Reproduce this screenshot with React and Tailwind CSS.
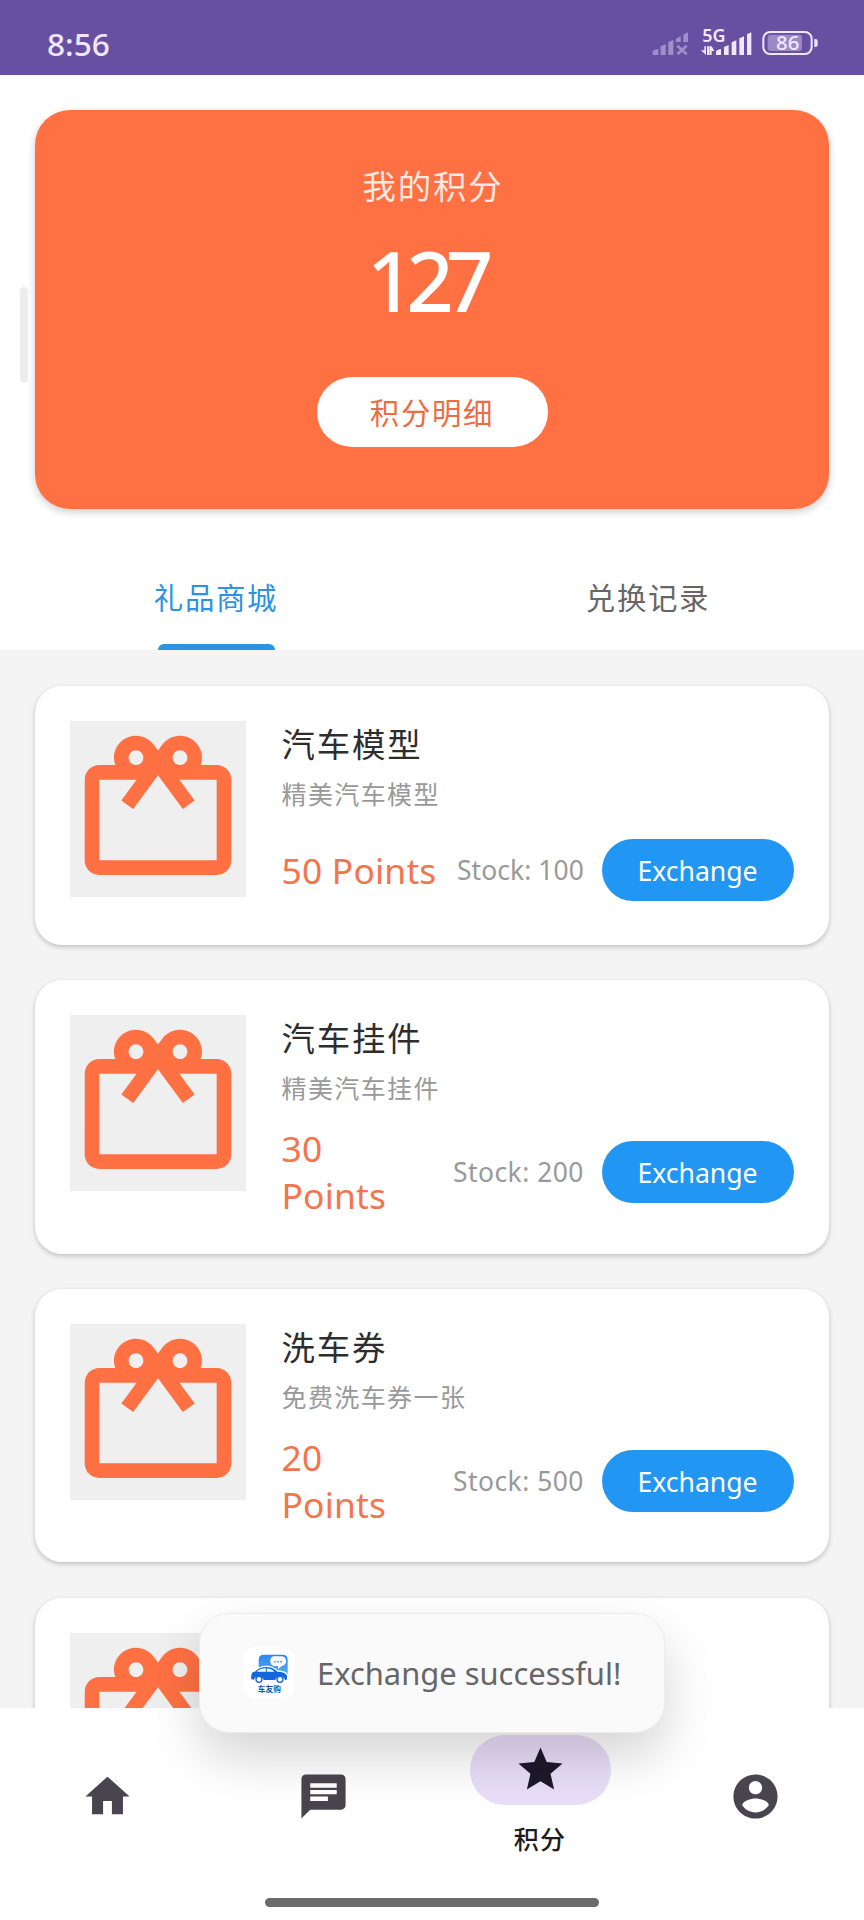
import React from 'react';

const gifts = [
  { name: '汽车模型', desc: '精美汽车模型', points: '50 Points', stock: 100 },
  { name: '汽车挂件', desc: '精美汽车挂件', points: '30\nPoints', stock: 200 },
  { name: '洗车券', desc: '免费洗车券一张', points: '20\nPoints', stock: 500 },
  { name: '', desc: '', points: '', stock: null },
];

const navItems = [
  { id: 'home', path: 'M10,20v-6h4v6h5v-8h3L12,3 2,12h3v8z' },
  {
    id: 'chat',
    path: 'M20,2L4,2c-1.1,0 -1.99,0.9 -1.99,2L2,22l4,-4h14c1.1,0 2,-0.9 2,-2L22,4c0,-1.1 -0.9,-2 -2,-2zM6,9h12v2L6,11L6,9zM14,14L6,14v-2h8v2zM18,8L6,8L6,6h12v2z',
  },
  {
    id: 'points',
    label: '积分',
    path: 'M12,17.27L18.18,21l-1.64,-7.03L22,9.24l-7.19,-0.61L12,2 9.19,8.63 2,9.24l5.46,4.73L5.82,21z',
  },
  {
    id: 'profile',
    path: 'M12,2C6.48,2 2,6.48 2,12s4.48,10 10,10 10,-4.48 10,-10S17.52,2 12,2zM12,5c1.66,0 3,1.34 3,3s-1.34,3 -3,3 -3,-1.34 -3,-3 1.34,-3 3,-3zM12,19.2c-2.5,0 -4.71,-1.28 -6,-3.22 0.03,-1.99 4,-3.08 6,-3.08 1.99,0 5.97,1.09 6,3.08 -1.29,1.94 -3.5,3.22 -6,3.22z',
  },
];

const StatusIcons = () => (
  <svg className="w-[168px] h-[50px]" viewBox="0 -30 504 150" fill="#f0e7ff">
    {/* empty second sim */}
    <g opacity="0.42">
      <path d="M8,75v-10q0,-5 17,-8v18z" />
      <path d="M32,75v-26l15,-6v32z" />
      <path d="M55,75v-39l15,-6v45z" />
      <path d="M78,36v-10l14,-7v17z" />
      <path d="M100,36v-22l14,-7v29z" />
      <path d="M82,47L110,73M110,47L82,73" stroke="#f0e7ff" strokeWidth="8" fill="none" />
    </g>
    <text x="157" y="35" fontSize="51" fontWeight="600" textLength="70" lengthAdjust="spacingAndGlyphs" className="font-['Noto_Sans',sans-serif]">5G</text>
    <path d="M163,49v12h-10l15,14v-26zM178,49v26h-7v-26zM185,49h-6v26h6v-12h8z" />
    <path d="M198,75v-10q0,-5 15,-8v18z" />
    <path d="M222,75v-24l14,-6v30z" />
    <path d="M245,75v-38l14,-6v44z" />
    <path d="M268,75v-50l14,-6v56z" />
    <path d="M291,75v-62l13,-6v68z" />
    <rect x="340" y="6" width="145" height="66" rx="20" fill="none" stroke="#f0e7ff" strokeWidth="6" />
    <rect x="353" y="14" width="103" height="49" rx="9" opacity="0.38" />
    <path d="M493,27h4q6,0 6,6v12q0,6 -6,6h-4z" />
    <text x="378" y="61" fontSize="58" fontWeight="500" textLength="70" lengthAdjust="spacingAndGlyphs" className="font-['Noto_Sans',sans-serif]">86</text>
  </svg>
);

const GiftIcon = () => (
  <svg className="w-[176px] h-[176px] shrink-0 bg-[#efefef]" viewBox="0 0 24 24" fill="#ff7043">
    <path d="M20,6h-2.18c0.11,-0.31 0.18,-0.65 0.18,-1c0,-1.66 -1.34,-3 -3,-3c-1.05,0 -1.96,0.54 -2.5,1.35l-0.5,0.67 -0.5,-0.68C10.96,2.54 10.05,2 9,2 7.34,2 6,3.34 6,5c0,0.35 0.07,0.69 0.18,1H4c-1.11,0 -1.99,0.89 -1.99,2L2,19c0,1.11 0.89,2 2,2h16c1.11,0 2,-0.89 2,-2V8c0,-1.11 -0.89,-2 -2,-2zM15,4c0.55,0 1,0.45 1,1s-0.45,1 -1,1 -1,-0.45 -1,-1 0.45,-1 1,-1zM9,4c0.55,0 1,0.45 1,1s-0.45,1 -1,1 -1,-0.45 -1,-1 0.45,-1 1,-1zM20,19H4V8h5.08L7,10.83 8.62,12 11,8.76l1,-1.36 1,1.36L15.38,12 17,10.83 14.92,8H20z" />
  </svg>
);

const AppLogo = () => (
  <svg className="w-[52px] h-[52px] shrink-0" viewBox="0 0 156 156">
    <defs>
      <linearGradient id="tile" x1="0" y1="0" x2="0" y2="1">
        <stop offset="0" stopColor="#2a86ea" />
        <stop offset="1" stopColor="#55adf6" />
      </linearGradient>
    </defs>
    <rect width="156" height="156" rx="42" fill="#fff" />
    <path d="M47,82V39q0,-16 16,-16h55q16,0 16,16v43z" fill="url(#tile)" />
    <path d="M96,28h18q15,0 15,14t-13,15l-11,9v-9h-9q-14,0 -14,-15t14,-14z" fill="#fff" />
    <g fill="#2a86ea">
      <circle cx="96" cy="44" r="2.5" />
      <circle cx="105" cy="44" r="2.5" />
      <circle cx="114" cy="44" r="2.5" />
    </g>
    <path
      d="M23,98q-2,-18 4,-23l8,-3q14,-14 36,-14q18,0 33,14q24,1 29,12q3,8 -1,17h-7a14,14 0 0 0 -27,0h-37a14,14 0 0 0 -27,0z"
      fill="#1267dc"
      stroke="#fff"
      strokeWidth="4"
    />
    <path d="M41,74q12,-10 27,-10q15,0 26,10z" fill="#fff" />
    <path d="M70,63v12" stroke="#1267dc" strokeWidth="3" />
    <g fill="#fff" stroke="#1267dc" strokeWidth="4">
      <circle cx="48" cy="97" r="9" />
      <circle cx="111" cy="97" r="9" />
    </g>
    <text x="44" y="134" fontSize="23" fontWeight="700" fill="#1557a8" textLength="70" className="font-['Noto_Sans_CJK_SC',sans-serif]">车友购</text>
  </svg>
);

const GiftCard = ({ gift }) => (
  <div className="flex gap-[35px] p-[35.2px] bg-white rounded-[27px] shadow-[0_2px_5px_rgba(0,0,0,0.22)]">
    <GiftIcon />
    {gift.name && (
      <div className="flex-1 flex flex-col">
        <h3 className="h-[47px] leading-[47px] text-[33.4px] tracking-[1.9px] text-[#2d2d2d]">{gift.name}</h3>
        <p className="mt-[9px] h-[35px] leading-[35px] text-[25px] tracking-[1.4px] text-[#999]">{gift.desc}</p>
        <div className="mt-[19px] min-h-[79px] flex items-center">
          <span className="flex-1 whitespace-pre-line text-[35.4px] leading-[46.6px] tracking-[0.2px] text-[#f4744c]">{gift.points}</span>
          <span className={`text-[26.4px] leading-[36px] text-[#999] mr-[17.6px] ${gift.stock > 100 ? 'tracking-[0.5px]' : 'tracking-[0.1px]'}`}>Stock: {gift.stock}</span>
          <button className="w-[192px] h-[62px] rounded-full bg-[#2196f3] text-white text-[26.6px] leading-[36px] pt-[2px]">Exchange</button>
        </div>
      </div>
    )}
  </div>
);

const NavItem = ({ item }) => {
  const icon = (
    <svg className="w-[53px] h-[53px]" viewBox="0 0 24 24" fill={item.label ? '#1d192b' : '#49454f'}>
      <path d={item.path} />
    </svg>
  );

  if (!item.label) {
    return <div className="flex-1 flex justify-center pt-[62px] pr-px">{icon}</div>;
  }
  return (
    <div className="flex-1 flex flex-col items-center pt-[27px]">
      <div className="w-[141px] h-[70px] rounded-full bg-[#e8def8] flex items-center justify-center">{icon}</div>
      <span className="mt-[16px] text-[25px] leading-[36px] tracking-[1.4px] font-medium text-[#1d1b20]">{item.label}</span>
    </div>
  );
};

const App = () => {
  return (
    <div className="relative w-[864px] h-[1920px] overflow-hidden flex flex-col bg-white font-['Noto_Sans','Noto_Sans_CJK_SC',sans-serif]">
      <header className="h-[75px] shrink-0 bg-[#6750a2] flex items-start justify-between pl-[47px] pr-[46px]">
        <span className="mt-[22px] text-[31.6px] leading-[43px] font-medium text-[#f0e7ff]">8:56</span>
        <div className="mt-[20px]">
          <StatusIcons />
        </div>
      </header>

      <section className="mt-[35.4px] mx-[35.3px] h-[399px] shrink-0 rounded-[35px] bg-[#ff7043] shadow-[0_3px_9px_rgba(0,0,0,0.2)] flex flex-col items-center">
        <p className="mt-[53px] pl-[2px] text-[33.4px] leading-[46px] tracking-[1.8px] text-[#ffe9e0]">我的积分</p>
        <p className="mt-[13px] pr-[12px] text-[83px] leading-[116px] tracking-[-8px] font-medium text-white">127</p>
        <button className="mt-[39px] w-[231px] h-[70px] rounded-full bg-white text-[29.4px] tracking-[1.7px] pt-[2px] text-[#ee6c42]">积分明细</button>
      </section>

      <nav className="mt-[34.6px] h-[106px] shrink-0 flex text-[29.4px] leading-[40px] tracking-[1.7px]">
        <div className="flex-1 flex flex-col items-center justify-between pt-[34px] text-[#2b92e4]">
          <span>礼品商城</span>
          <div className="w-[117px] h-[6px] rounded-t-[6px] bg-[#2b92e4]"></div>
        </div>
        <div className="flex-1 flex flex-col items-center pt-[34px] text-[#666]">
          <span>兑换记录</span>
        </div>
      </nav>

      <main className="h-[1058px] shrink-0 overflow-hidden bg-[#f4f4f4] px-[35.3px] pt-[35.6px] flex flex-col gap-[35.2px]">
        {gifts.map((gift, i) => (
          <GiftCard key={i} gift={gift} />
        ))}
      </main>

      <footer className="flex-1 bg-white flex flex-col items-center">
        <div className="w-full h-[190px] flex">
          {navItems.map((item) => (
            <NavItem key={item.id} item={item} />
          ))}
        </div>
        <div className="w-[334px] h-[9px] rounded-full bg-[#6b6b6b]"></div>
      </footer>

      {/* edge handle */}
      <div className="absolute left-[20px] top-[287px] w-[8px] h-[96px] rounded-full bg-[#ededed]"></div>

      {/* toast */}
      <div className="absolute left-[199px] top-[1613px] w-[466px] h-[120px] rounded-[30px] border border-[#ececec] bg-[#fafafa] shadow-[0_24px_52px_rgba(0,0,0,0.17)] flex items-center pl-[43px] gap-[22px]">
        <AppLogo />
        <span className="text-[30.9px] leading-[42px] text-[#666] whitespace-nowrap">Exchange successful!</span>
      </div>
    </div>
  );
};

export default App;
